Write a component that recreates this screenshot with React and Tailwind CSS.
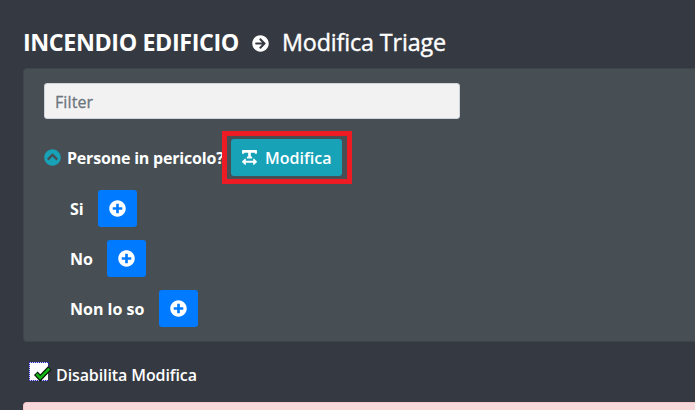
import { FaArrowCircleRight, FaChevronCircleUp, FaPlusCircle, FaTextWidth } from "react-icons/fa";

function Answer({ label, width }) {
  return (
    <li className="flex h-[37px] items-center">
      <span className={`${width} shrink-0 whitespace-nowrap font-bold leading-6 tracking-normal`}>{label}</span>
      <button className="flex h-[37px] w-[39px] items-center justify-center rounded-[3px] bg-[#007bff]">
        <FaPlusCircle size={17} />
      </button>
    </li>
  );
}

function CheckMark() {
  return (
    <svg className="h-[20px] w-[24px] shrink-0" viewBox="0 0 24 20" fill="none">
      <rect x="1" y="1" width="18" height="17" fill="#fff" />
      <path d="M0 .5h20M0 18.5h19M.5 1v18" stroke="#c8c8ee" shapeRendering="crispEdges" />
      <path d="M0 .5h20M0 18.5h19M.5 0v19M19.5 0v6" stroke="#2626c8" strokeDasharray="1 1" shapeRendering="crispEdges" />
      <path d="M6.8 11.3l4.4 4.7L20.8 6" stroke="#0b1a0b" strokeWidth="5" />
      <path d="M7.5 12l3.7 3.8L20.3 6.6" stroke="#12b812" strokeWidth="2.6" />
    </svg>
  );
}

export default function App() {
  return (
    <main className="flex h-[410px] w-[695px] flex-col overflow-hidden bg-[#353941] pl-[23px] font-['Open_Sans','Noto_Sans',sans-serif] text-[16px] tracking-[-0.1px] text-white">
      <h1 className="flex h-[68px] shrink-0 items-center whitespace-nowrap pt-[15px] text-[23.3px] leading-[30px]">
        <span className="w-[229px] font-bold tracking-[-0.4px]">INCENDIO EDIFICIO</span>
        <FaArrowCircleRight size={17} className="mt-[3px] shrink-0" />
        <span className="ml-[13px] font-medium tracking-[-0.13px] [-webkit-text-stroke:0.4px_white]">Modifica Triage</span>
      </h1>
      <section className="h-[274px] shrink-0 rounded-l-[4px] border border-r-0 border-[#3e454b] bg-[#474f54] pl-[20px] pt-[14px]">
        <input
          placeholder="Filter"
          className="block h-[36px] w-[416px] rounded-[3px] border border-[#ced4da] bg-[#f2f2f2] px-[10px] pt-[2px] font-medium tracking-[0.1px] placeholder:text-[#6c757d] [-webkit-text-stroke:0.3px_#6c757d]"
        />
        <div className="mt-[12px] flex h-[53px] items-center">
          <FaChevronCircleUp size={17} className="shrink-0 text-[#17a2b8]" />
          <span className="ml-[6px] w-[155px] shrink-0 whitespace-nowrap font-bold leading-6 tracking-[-0.2px]">Persone in pericolo?</span>
          <div className="relative h-[53px] w-[130px] border-[5px] border-[#ed1c24] py-[3px] pl-[4px]">
            <button className="flex h-[37px] w-[111px] items-center rounded-[3px] bg-[#17a2b8] pl-[10px] font-semibold tracking-normal">
              <FaTextWidth size={17} className="mr-[7px]" />
              Modifica
            </button>
          </div>
        </div>
        <ul className="mt-[6px] flex flex-col gap-[13px] pl-[26px]">
          <Answer label="Si" width="w-[28px]" />
          <Answer label="No" width="w-[37px]" />
          <Answer label="Non lo so" width="w-[89px]" />
        </ul>
      </section>
      <label className="flex h-[60px] shrink-0 items-center pl-[6px] pt-[5px] font-semibold">
        <span className="-mt-[6px] mr-[3px]"><CheckMark /></span>
        Disabilita Modifica
      </label>
      <div className="h-[40px] shrink-0 rounded-tl-[4px] border border-r-0 border-[#f5c6cb] bg-[#f8d7da]" />
    </main>
  );
}
